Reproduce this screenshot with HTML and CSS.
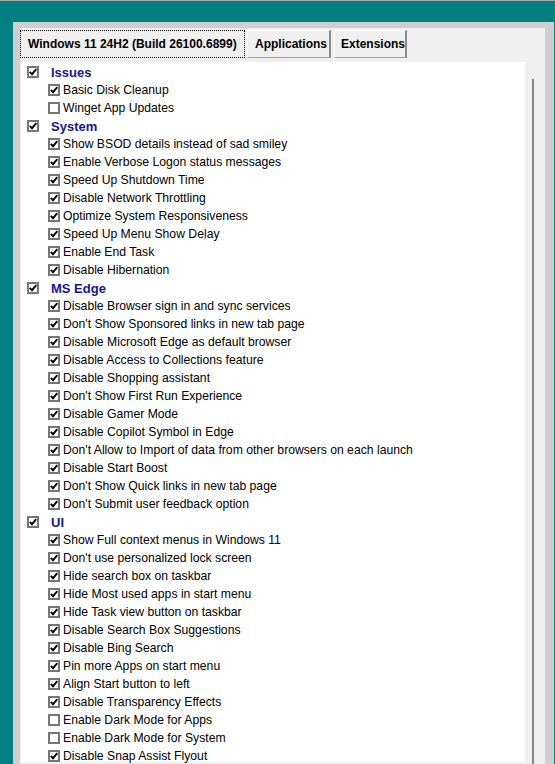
FILE: index.html
```html
<!DOCTYPE html>
<html>
<head>
<meta charset="utf-8">
<link rel="stylesheet" href="styles.css">
</head>
<body>
<div class="window">
  <div class="inner">
    <div class="tabs">
      <div class="tab selected"><span class="focus">Windows 11 24H2 (Build 26100.6899)</span></div>
      <div class="tab t2">Applications</div>
      <div class="tab t3">Extensions</div>
    </div>
    <div class="content">
      <div class="list" id="list"></div>
      <div class="scroll"><div class="thumb"></div></div>
    </div>
  </div>
</div>
<script src="app.js"></script>
</body>
</html>
```
FILE: app.js
```js
var data = [
  ["Issues", [["Basic Disk Cleanup",1],["Winget App Updates",0]]],
  ["System", [["Show BSOD details instead of sad smiley",1],["Enable Verbose Logon status messages",1],["Speed Up Shutdown Time",1],["Disable Network Throttling",1],["Optimize System Responsiveness",1],["Speed Up Menu Show Delay",1],["Enable End Task",1],["Disable Hibernation",1]]],
  ["MS Edge", [["Disable Browser sign in and sync services",1],["Don't Show Sponsored links in new tab page",1],["Disable Microsoft Edge as default browser",1],["Disable Access to Collections feature",1],["Disable Shopping assistant",1],["Don't Show First Run Experience",1],["Disable Gamer Mode",1],["Disable Copilot Symbol in Edge",1],["Don't Allow to Import of data from other browsers on each launch",1],["Disable Start Boost",1],["Don't Show Quick links in new tab page",1],["Don't Submit user feedback option",1]]],
  ["UI", [["Show Full context menus in Windows 11",1],["Don't use personalized lock screen",1],["Hide search box on taskbar",1],["Hide Most used apps in start menu",1],["Hide Task view button on taskbar",1],["Disable Search Box Suggestions",1],["Disable Bing Search",1],["Pin more Apps on start menu",1],["Align Start button to left",1],["Disable Transparency Effects",1],["Enable Dark Mode for Apps",0],["Enable Dark Mode for System",0],["Disable Snap Assist Flyout",1]]]
];
var check = '<svg viewBox="0 0 8 8" width="8" height="8"><polyline points="0.8,3.8 3,6.2 7.3,1.2" fill="none" stroke="#000" stroke-width="1.9"/></svg>';
function box(c){ return '<span class="cb">' + (c ? check : '') + '</span>'; }
var html = '';
data.forEach(function(g){
  html += '<div class="row parent">' + box(1) + '<span class="head">' + g[0] + '</span></div>';
  g[1].forEach(function(it){
    html += '<div class="row child">' + box(it[1]) + '<span class="lbl">' + it[0].replace(/'/g, '&#39;') + '</span></div>';
  });
});
document.getElementById('list').innerHTML = html;
```
FILE: styles.css
```css
html, body {
  margin: 0;
  padding: 0;
  height: 100%;
  overflow: hidden;
}
body {
  background: #008080;
  border-top: 1px solid #a8a8a8;
  box-sizing: border-box;
  font-family: "Liberation Sans", Arial, sans-serif;
}
.window {
  margin: 21px 1px 0 13px;
  background: #cfcfcf;
  padding: 6px 9px 0 7px;
  height: calc(100vh - 22px);
  box-sizing: border-box;
  overflow: hidden;
}
.inner {
  background: #f0f0f0;
  height: 100%;
  padding-top: 2px;
  box-sizing: border-box;
  overflow: hidden;
}
.tabs {
  display: flex;
  height: 28px;
  gap: 2px;
}
.tab {
  box-sizing: border-box;
  height: 28px;
  display: flex;
  align-items: center;
  font-weight: bold;
  font-size: 12px;
  color: #000;
  background: #f0f0f0;
  border-top: 1px solid #ffffff;
  border-left: 1px solid #ffffff;
  border-right: 2px solid #8a8a8a;
  border-bottom: 1px solid #a0a0a0;
  padding: 0 6px;
}
.tab.selected {
  width: 225px;
  border: none;
  padding: 0;
}
.focus {
  display: flex;
  align-items: center;
  width: 100%;
  height: 100%;
  box-sizing: border-box;
  border: 1px dotted #000;
  padding-left: 7px;
}
.t2 { width: 84px; padding-left: 7px; }
.t3 { width: 73px; margin-left: 1px; }
.content {
  display: flex;
  margin-top: 4px;
  height: 700px;
}
.list {
  background: #ffffff;
  margin-left: 1px;
  width: 504px;
  padding-top: 1px;
}
.scroll {
  width: 20px;
  display: flex;
  justify-content: flex-start;
}
.thumb {
  margin-left: 7px;
  margin-top: 17px;
  width: 2px;
  background: #888888;
  height: 700px;
}
.row {
  height: 18px;
  display: flex;
  align-items: center;
}
.parent { padding-left: 6px; }
.child { padding-left: 27px; }
.cb {
  box-sizing: border-box;
  width: 12px;
  height: 12px;
  border: 2px solid #767676;
  background: #fff;
  display: flex;
  align-items: center;
  justify-content: center;
  flex: none;
}
.cb svg { display: block; }
.head {
  margin-left: 12px;
  font-weight: bold;
  font-size: 13px;
  color: #16168c;
}
.lbl {
  margin-left: 3px;
  font-size: 12.2px;
  color: #000;
}
```
